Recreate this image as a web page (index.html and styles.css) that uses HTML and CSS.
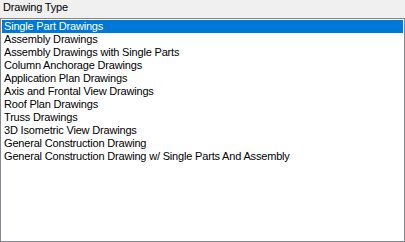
FILE: index.html
```html
<!DOCTYPE html>
<html lang="en">
<head>
    <meta charset="UTF-8">
    <title>Drawing Type</title>
    <link rel="stylesheet" href="styles.css">
</head>
<body>
    <div class="panel">
        <div class="caption">Drawing Type</div>
        <ul class="listbox">
            <li class="selected">Single Part Drawings</li>
            <li>Assembly Drawings</li>
            <li>Assembly Drawings with Single Parts</li>
            <li>Column Anchorage Drawings</li>
            <li>Application Plan Drawings</li>
            <li>Axis and Frontal View Drawings</li>
            <li>Roof Plan Drawings</li>
            <li>Truss Drawings</li>
            <li>3D Isometric View Drawings</li>
            <li>General Construction Drawing</li>
            <li>General Construction Drawing w/ Single Parts And Assembly</li>
        </ul>
    </div>
</body>
</html>
```

FILE: styles.css
```css
body {
    margin: 0;
    padding: 0;
    background-color: #f0f0f0;
    font-family: "Liberation Sans", Arial, sans-serif;
    font-size: 11px;
    letter-spacing: -0.18px;
    color: #000;
}
.panel {
    display: flex;
    flex-direction: column;
    width: 405px;
    height: 242px;
}
.caption {
    height: 18px;
    line-height: 14px;
    padding-left: 3px;
}
.listbox {
    flex: 1;
    margin: 0;
    padding: 1px;
    list-style: none;
    background-color: #fff;
    border: 1px solid #828790;
}
.listbox li {
    height: 13px;
    line-height: 13px;
    padding-left: 2px;
    white-space: nowrap;
}
.listbox li.selected {
    background-color: #0078d7;
    color: #fff;
}
```
